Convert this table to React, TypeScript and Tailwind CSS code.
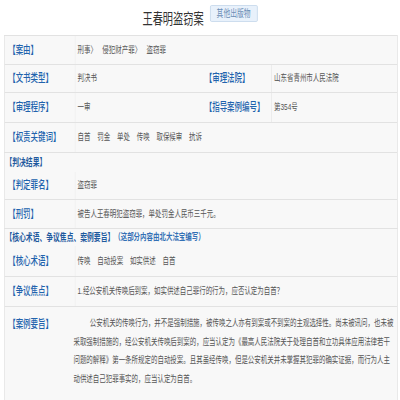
import React from "react";

const labelCls =
  "text-[11px] font-medium text-[#2163ad] whitespace-nowrap";
const valueCls = "text-[9.5px] text-[#555] whitespace-nowrap";

const Label = ({ children }: { children: React.ReactNode }) => (
  <span className={labelCls}>{children}</span>
);

const Row = ({
  label,
  children,
  h,
  last,
}: {
  label: string;
  children: React.ReactNode;
  h: string;
  last?: boolean;
}) => (
  <div className={`flex ${h} ${last ? "" : "border-b border-[#e2e2e2]"}`}>
    <div className="w-[104px] shrink-0 pl-[5px] flex items-center border-r border-[#eeeeee]">
      <Label>{`【${label}】`}</Label>
    </div>
    <div className="flex-1 pl-[3px] flex items-center">{children}</div>
  </div>
);

const Words = ({ items }: { items: string[] }) => (
  <div className={`flex gap-[10px] ${valueCls}`}>
    {items.map((w) => (
      <span key={w}>{w}</span>
    ))}
  </div>
);

const lines = [
  "公安机关的传唤行为，并不是强制措施，被传唤之人亦有到案或不到案的主观选择性。尚未被讯问，也未被",
  "采取强制措施的，经公安机关传唤后到案的，应当认定为《最高人民法院关于处理自首和立功具体应用法律若干",
  "问题的解释》第一条所规定的自动投案。且其虽经传唤，但是公安机关并未掌握其犯罪的确实证据，而行为人主",
  "动供述自己犯罪事实的，应当认定为自首。",
];

export default function App() {
  return (
    <div className="w-[400px] h-[400px] overflow-hidden bg-white">
      <div
        className="w-[588px] origin-top-left scale-x-[0.68]"
        style={{ fontFamily: "'Liberation Sans','Noto Sans CJK SC',sans-serif" }}
      >
        {/* title */}
        <div className="h-[35px] flex justify-center items-start gap-[9px]">
          <h1 className="mt-[10px] text-[15px] leading-[18px] text-[#333]">
            王春明盗窃案
          </h1>
          <button className="mt-[5px] h-[17px] px-[9px] text-[10px] leading-[15px] text-[#6a8db5] bg-[#e8f1fb] border border-[#c6d8eb] rounded-[2px]">
            其他出版物
          </button>
        </div>

        {/* basic info */}
        <div className="ml-[6px] mr-[3px] border border-[#e2e2e2] bg-[#f8f8f8]">
          <Row label="案由" h="h-[29px]">
            <div className={`flex gap-[8px] ${valueCls}`}>
              <span>刑事〉</span>
              <span>侵犯财产罪〉</span>
              <span>盗窃罪</span>
            </div>
          </Row>
          <div className="flex h-[28px] border-b border-[#e2e2e2]">
            <div className="w-[104px] shrink-0 pl-[5px] flex items-center border-r border-[#eeeeee]">
              <Label>【文书类型】</Label>
            </div>
            <div className={`w-[186px] shrink-0 pl-[3px] flex items-center ${valueCls}`}>
              判决书
            </div>
            <div className="w-[103px] shrink-0 pl-[4px] flex items-center border-r border-[#e6e6e6]">
              <Label>【审理法院】</Label>
            </div>
            <div className={`flex-1 pl-[3px] flex items-center ${valueCls}`}>
              山东省青州市人民法院
            </div>
          </div>
          <div className="flex h-[30px] border-b border-[#e2e2e2]">
            <div className="w-[104px] shrink-0 pl-[5px] flex items-center border-r border-[#eeeeee]">
              <Label>【审理程序】</Label>
            </div>
            <div className={`w-[186px] shrink-0 pl-[3px] flex items-center ${valueCls}`}>
              一审
            </div>
            <div className="w-[103px] shrink-0 pl-[4px] flex items-center border-r border-[#e6e6e6]">
              <Label>【指导案例编号】</Label>
            </div>
            <div className={`flex-1 pl-[3px] flex items-center ${valueCls}`}>
              第354号
            </div>
          </div>
          <Row label="权责关键词" h="h-[29px]" last>
            <Words items={["自首", "罚金", "单处", "传唤", "取保候审", "抗诉"]} />
          </Row>
        </div>

        {/* judgement */}
        <div className="ml-[6px] mr-[3px] border-x border-b border-[#e2e2e2] bg-[#f8f8f8]">
          <div className="h-[19px] flex items-center pl-[1px] text-[10px] font-bold text-[#1f5a9e]">
            【判决结果】
          </div>
          <Row label="判定罪名" h="h-[28px]">
            <span className={valueCls}>盗窃罪</span>
          </Row>
          <Row label="刑罚" h="h-[28px]" last>
            <span className={valueCls}>被告人王春明犯盗窃罪，单处罚金人民币三千元。</span>
          </Row>
        </div>

        {/* core */}
        <div className="ml-[6px] mr-[3px] border-x border-[#e2e2e2] bg-[#f8f8f8] h-[180px]">
          <div className="h-[17px] flex items-center pl-[1px] text-[10px] font-bold text-[#1f5a9e] whitespace-nowrap">
            【核心术语、争议焦点、案例要旨】
            <span className="text-[9.5px] font-semibold text-[#3470b5]">
              （这部分内容由北大法宝编写）
            </span>
          </div>
          <Row label="核心术语" h="h-[31px]">
            <Words items={["传唤", "自动投案", "如实供述", "自首"]} />
          </Row>
          <Row label="争议焦点" h="h-[30px]">
            <span className={valueCls}>
              1.经公安机关传唤后到案，如实供述自己罪行的行为，应否认定为自首？
            </span>
          </Row>
          <div className="flex pt-[7px]">
            <div className="w-[104px] shrink-0 pl-[5px] leading-[18.5px]">
              <Label>【案例要旨】</Label>
            </div>
            <div className="text-[9.5px] leading-[18.5px] text-[#555]">
              {lines.map((l, i) => (
                <div
                  key={i}
                  className={`whitespace-nowrap ${i === 0 ? "pl-[21px]" : "-ml-[3px]"}`}
                >
                  {l}
                </div>
              ))}
            </div>
          </div>
        </div>
      </div>
    </div>
  );
}
